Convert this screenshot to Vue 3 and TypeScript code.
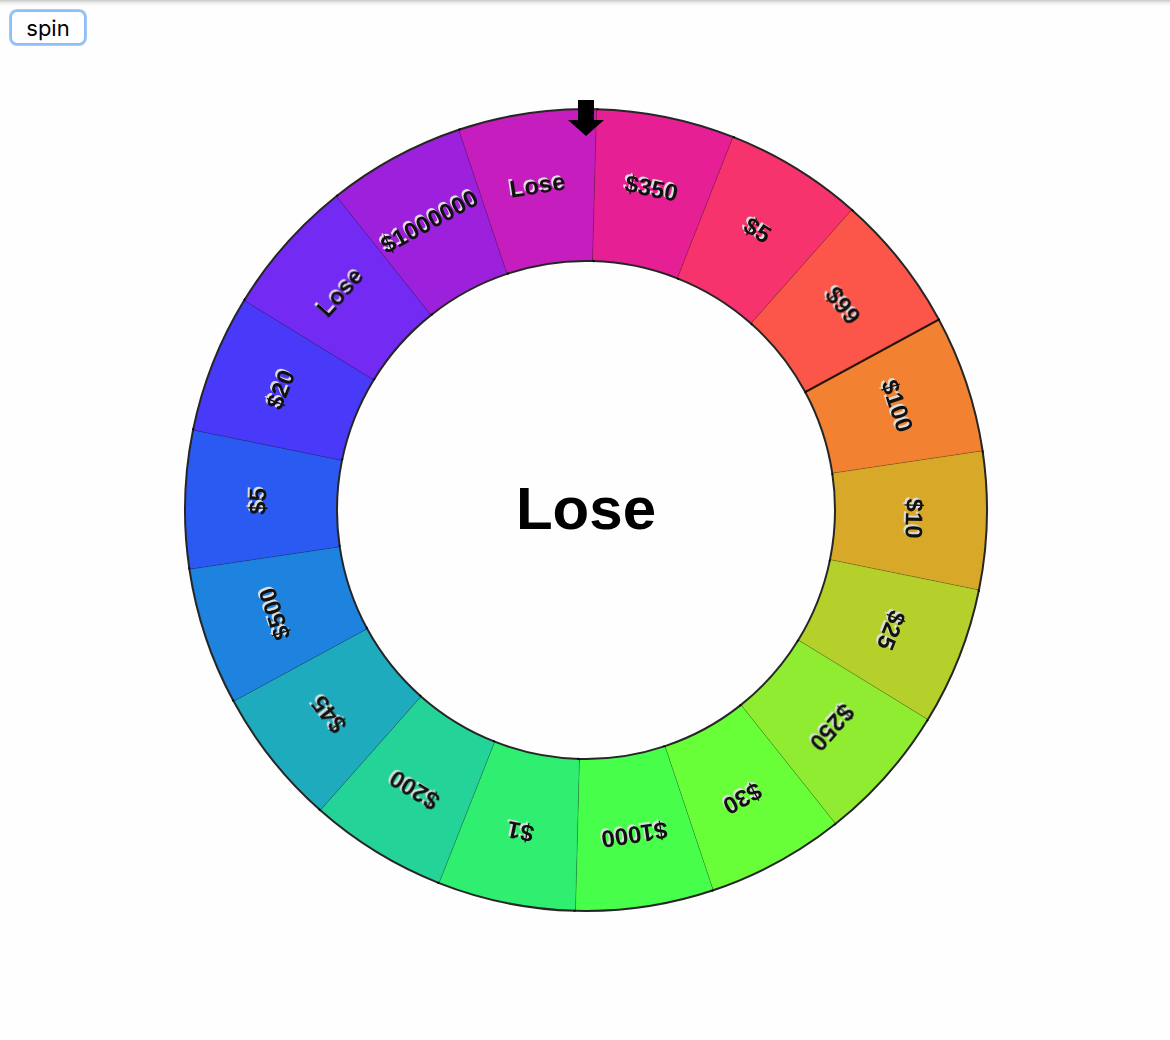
<script setup lang="ts">
import { computed, onBeforeUnmount, ref } from 'vue'

interface Slice {
  label: string
  color: string
}

const slices: Slice[] = [
  { label: '$100', color: '#f28231' },
  { label: '$10', color: '#d8a829' },
  { label: '$25', color: '#b5cf2b' },
  { label: '$250', color: '#90ec30' },
  { label: '$30', color: '#69ff38' },
  { label: '$1000', color: '#47ff4b' },
  { label: '$1', color: '#2fee70' },
  { label: '$200', color: '#24d398' },
  { label: '$45', color: '#1eabbd' },
  { label: '$500', color: '#1e83df' },
  { label: '$5', color: '#2a5af2' },
  { label: '$20', color: '#493af9' },
  { label: 'Lose', color: '#732af2' },
  { label: '$1000000', color: '#9d21dc' },
  { label: 'Lose', color: '#c61ebe' },
  { label: '$350', color: '#e61f94' },
  { label: '$5', color: '#f7336d' },
  { label: '$99', color: '#fc5549' },
]

const CENTER = 500
const OUTER = 400
const INNER = 250
const LABEL_RADIUS = 320
const step = 360 / slices.length

// Clockwise angle of the first slice's leading edge, measured from the pointer.
const rotation = ref(61.5)

function point(radius: number, degrees: number): { x: number; y: number } {
  const rad = (degrees * Math.PI) / 180
  return { x: CENTER + radius * Math.sin(rad), y: CENTER - radius * Math.cos(rad) }
}

// The leading edge is left open, so only the outer rim, trailing edge and inner rim are stroked.
function slicePath(start: number): string {
  const a = point(OUTER, start)
  const b = point(OUTER, start + step)
  const c = point(INNER, start + step)
  const d = point(INNER, start)
  return `M${a.x} ${a.y}A${OUTER} ${OUTER} 0 0 1 ${b.x} ${b.y}L${c.x} ${c.y}A${INNER} ${INNER} 0 0 0 ${d.x} ${d.y}`
}

function edgePath(start: number): string {
  const a = point(OUTER, start)
  const b = point(INNER, start)
  return `M${a.x} ${a.y}L${b.x} ${b.y}`
}

const wheel = computed(() =>
  slices.map((slice, i) => {
    const start = rotation.value + i * step
    const middle = start + step / 2
    const at = point(LABEL_RADIUS, middle)
    return {
      ...slice,
      path: slicePath(start),
      edge: edgePath(start),
      transform: `translate(${at.x} ${at.y}) rotate(${middle})`,
    }
  }),
)

const result = computed(() => {
  const turned = (((-rotation.value) % 360) + 360) % 360
  return slices[Math.floor(turned / step) % slices.length].label
})

const spinning = ref(false)
let frame = 0

function spin(): void {
  if (spinning.value) return
  spinning.value = true
  const from = rotation.value
  const distance = 720 + Math.random() * 720
  const duration = 4000
  const began = performance.now()
  const tick = (now: number) => {
    const t = Math.min(Math.max((now - began) / duration, 0), 1)
    rotation.value = from + distance * (1 - Math.pow(1 - t, 3))
    if (t < 1) frame = requestAnimationFrame(tick)
    else spinning.value = false
  }
  frame = requestAnimationFrame(tick)
}

onBeforeUnmount(() => cancelAnimationFrame(frame))
</script>

<template>
  <main class="page">
    <button class="spin" type="button" @click="spin">spin</button>
    <svg class="wheel" viewBox="0 0 1000 1000" role="img" aria-label="Prize wheel">
      <path
        v-for="(slice, i) in wheel"
        :key="`slice-${i}`"
        class="slice"
        :d="slice.path"
        :fill="slice.color"
      />
      <path v-for="(slice, i) in wheel" :key="`edge-${i}`" class="edge" :d="slice.edge" />
      <g class="labels">
        <text v-for="(slice, i) in wheel" :key="`label-${i}`" :transform="slice.transform">
          {{ slice.label }}
        </text>
      </g>
      <path d="M492 90H508V110H518L500 126L482 110H492Z" />
      <text v-if="!spinning" class="result" x="500" y="519">{{ result }}</text>
    </svg>
  </main>
</template>

<style>
body {
  margin: 0;
  background: #fefefe;
}
</style>

<style scoped>
.page {
  display: flex;
  align-items: flex-start;
  box-sizing: border-box;
  padding: 10px 10px 20px;
  background: linear-gradient(#c8c8c8, #f0f0f0 3px, #fefefe 6px) no-repeat top / 100% 6px;
}

.spin {
  flex: none;
  box-sizing: border-box;
  width: 76px;
  height: 35px;
  padding: 0;
  border: 2px solid #8dbff6;
  border-radius: 7px;
  outline: none;
  background: #fff;
  box-shadow: 0 0 0 1px #a9cff8;
  color: #000;
  font: 22px/30px Inter, "Liberation Sans", sans-serif;
}

.wheel {
  flex: 0 1 1000px;
  min-width: 0;
  aspect-ratio: 1;
  font-family: "Liberation Sans", Arial, sans-serif;
  font-weight: bold;
  text-anchor: middle;
}

.slice {
  stroke: #000;
  stroke-opacity: 0.85;
  stroke-width: 4px;
  paint-order: stroke;
}

.edge {
  fill: none;
  stroke: #000;
  stroke-opacity: 0.2;
  stroke-width: 1px;
}

.labels {
  fill: #111;
  font-size: 24px;
  filter: drop-shadow(-2px -2px 0 #dcdcdc);
}

.result {
  font-size: 60px;
}
</style>
